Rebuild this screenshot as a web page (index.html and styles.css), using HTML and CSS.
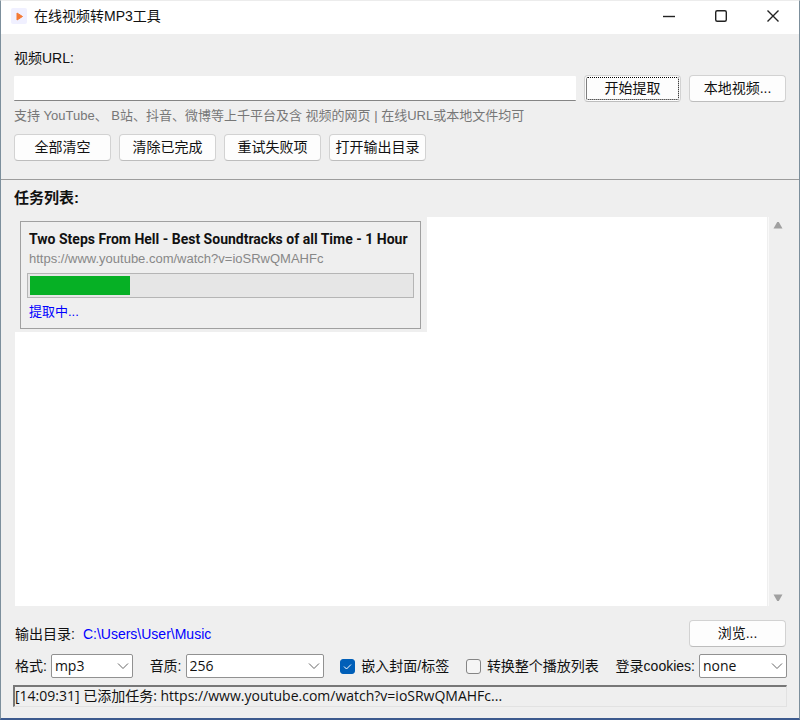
FILE: index.html
```html
<!DOCTYPE html>
<html lang="zh-CN">
<head>
<meta charset="utf-8">
<meta name="viewport" content="width=device-width, initial-scale=1">
<title>在线视频转MP3工具</title>
<link rel="stylesheet" href="styles.css">
</head>
<body>
<div class="window">
  <header class="titlebar">
    <svg class="app-icon" viewBox="0 0 16 16" aria-hidden="true"><rect width="16" height="16" rx="2" fill="#f0f0ff"/><path d="M6 5v7l5.5-3.5z" fill="#f47a35" stroke="#f47a35" stroke-linejoin="round"/></svg>
    <h1 class="title">在线视频转MP3工具</h1>
    <div class="controls">
      <button class="control" type="button" aria-label="最小化"><svg viewBox="0 0 14 14"><path d="M1 7.5h12"/></svg></button>
      <button class="control" type="button" aria-label="最大化"><svg viewBox="0 0 14 14"><rect x="1.7" y="1.7" width="10.6" height="10.6" rx="1.5"/></svg></button>
      <button class="control" type="button" aria-label="关闭"><svg viewBox="0 0 14 14"><path d="M1.5 1.5l11 11M12.5 1.5l-11 11"/></svg></button>
    </div>
  </header>

  <section class="source">
    <label class="url-label" for="url">视频URL:</label>
    <div class="url-row">
      <input class="url" id="url" type="text">
      <button class="btn btn-focused" type="button">开始提取</button>
      <button class="btn" type="button">本地视频...</button>
    </div>
    <p class="hint">支持 YouTube、 B站、抖音、微博等上千平台及含 视频的网页 | 在线URL或本地文件均可</p>
    <div class="actions">
      <button class="btn" type="button">全部清空</button>
      <button class="btn" type="button">清除已完成</button>
      <button class="btn" type="button">重试失败项</button>
      <button class="btn" type="button">打开输出目录</button>
    </div>
  </section>

  <main class="tasks">
    <h2 class="tasks-title">任务列表:</h2>
    <div class="task-area">
      <div class="task-list">
        <div class="task-cell">
          <article class="task">
            <h3 class="task-name">Two Steps From Hell - Best Soundtracks of all Time - 1 Hour</h3>
            <p class="task-url">https://www.youtube.com/watch?v=ioSRwQMAHFc</p>
            <div class="progress" role="progressbar" aria-valuenow="26" aria-valuemin="0" aria-valuemax="100"><div class="progress-fill" style="width:26.4%"></div></div>
            <p class="task-state">提取中...</p>
          </article>
        </div>
      </div>
      <div class="scrollbar" aria-hidden="true">
        <svg viewBox="0 0 10 8"><path d="M4.2 1h1.6L9.5 7.5h-9z"/></svg>
        <svg viewBox="0 0 10 8"><path d="M4.2 7h1.6L9.5.5h-9z"/></svg>
      </div>
    </div>
  </main>

  <footer class="footer">
    <div class="output">
      <span>输出目录:</span>
      <a class="path" href="#">C:\Users\User\Music</a>
      <button class="btn" type="button">浏览...</button>
    </div>
    <div class="options">
      <div class="field"><label for="format">格式:</label>
        <span class="select select-format"><select id="format"><option>mp3</option></select><svg viewBox="0 0 12 8"><path d="M1 1.5l5 5 5-5"/></svg></span></div>
      <div class="field"><label for="quality">音质:</label>
        <span class="select select-quality"><select id="quality"><option>256</option></select><svg viewBox="0 0 12 8"><path d="M1 1.5l5 5 5-5"/></svg></span></div>
      <label class="check"><input type="checkbox" checked><svg viewBox="0 0 15 15"><path d="M4 7.5l2.5 2.5L11 5.5"/></svg>嵌入封面/标签</label>
      <label class="check"><input type="checkbox">转换整个播放列表</label>
      <div class="field"><label for="cookies">登录cookies:</label>
        <span class="select select-cookies"><select id="cookies"><option>none</option></select><svg viewBox="0 0 12 8"><path d="M1 1.5l5 5 5-5"/></svg></span></div>
    </div>
    <p class="status">[14:09:31] 已添加任务: https://www.youtube.com/watch?v=ioSRwQMAHFc...</p>
  </footer>
</div>
</body>
</html>
```
FILE: styles.css
```css
:root {
  --face: #efefef;
  --ui: "Open Sans", "Noto Sans CJK SC", sans-serif;
  --classic: "Liberation Sans", "Noto Sans CJK SC", sans-serif;
}

* { box-sizing: border-box; }

body {
  margin: 0;
  background: #7c8f9c;
  color: #111;
  font: 14px/20px var(--classic);
}

h1, h2, h3, p { margin: 0; font-size: inherit; font-weight: normal; }

button, input, select { font: inherit; color: inherit; margin: 0; }

.window {
  display: flex;
  flex-direction: column;
  min-height: 100vh;
  background: var(--face);
  border: 1px solid #7c8f9c;
  border-top-color: #ececec;
  border-bottom: 2px solid #3c5a8e;
}

.titlebar {
  display: flex;
  align-items: center;
  height: 33px;
  padding: 0 0 3px 10px;
  background: #fff;
}

.app-icon { width: 16px; height: 16px; }

.title {
  flex: 1;
  margin-left: 7px;
  font: 14px/20px var(--classic);
}

.controls { display: flex; }

.control {
  display: grid;
  place-items: center;
  width: 52px;
  height: 30px;
  padding: 0;
  border: 0;
  background: none;
}

.control svg {
  width: 14px;
  height: 14px;
  fill: none;
  stroke: #222;
  stroke-width: 1.4;
}

.source {
  padding: 14px 13px 18px;
  border-bottom: 1px solid #9c9c9c;
}

.url-label { display: block; }

.url-row {
  display: flex;
  align-items: center;
  gap: 8px;
  margin-top: 7px;
}

.url {
  flex: 1;
  min-width: 0;
  height: 25px;
  padding: 0 6px;
  border: 0;
  border-bottom: 1px solid #858585;
  border-radius: 1px;
  background: #fff;
}

.btn {
  width: 97px;
  height: 27px;
  padding: 0 0 2px;
  border: 1px solid #d2d2d2;
  border-bottom-color: #bdbdbd;
  border-radius: 4px;
  background: #fdfdfd;
  line-height: 20px;
  white-space: nowrap;
}

.btn-focused {
  outline: 1px dotted #000;
  outline-offset: -3px;
}

.hint {
  margin: 4px 0 8px;
  color: #777;
  font-size: 13px;
}

.actions { display: flex; gap: 8px; }

.tasks {
  display: flex;
  flex: 1;
  flex-direction: column;
  padding: 8px 13px 0;
}

.tasks-title {
  font-size: 15px;
  font-weight: bold;
}

.task-area { display: flex; flex: 1; margin-top: 9px; }

.task-list {
  flex: 1;
  background: #fff;
  border-left: 1px solid var(--face);
}

.task-cell {
  width: fit-content;
  padding: 4px 6px 3px 5px;
  background: var(--face);
}

.task {
  padding: 7px 6px 6px;
  border: 1px solid #a0a0a0;
}

.task-name {
  padding: 0 6px 0 2px;
  font-family: Roboto, var(--classic);
  font-weight: bold;
  white-space: nowrap;
}

.task-url {
  padding: 0 2px;
  color: #888;
  font-size: 13px;
}

.progress {
  height: 25px;
  margin: 4px 0;
  padding: 2px;
  border: 1px solid #b5b5b5;
  background: #e6e6e6;
}

.progress-fill { height: 100%; background: #06b025; }

.task-state {
  padding: 0 2px;
  color: #00f;
  font-size: 13px;
}

.scrollbar {
  display: flex;
  flex-direction: column;
  justify-content: space-between;
  align-items: center;
  width: 18px;
  margin-left: 1px;
  padding: 4px 3px 4px 4px;
  border-left: 1px solid #f9f9f9;
}

.scrollbar svg { width: 10px; height: 8px; fill: #a0a0a0; }

.footer { padding: 14px 12px 11px; }

.output {
  display: flex;
  align-items: center;
  gap: 8px;
  padding: 0 1px 0 2px;
}

.path { flex: 1; color: #00f; text-decoration: none; }

.options {
  display: flex;
  align-items: center;
  justify-content: space-between;
  margin-top: 7px;
  padding-left: 2px;
  white-space: nowrap;
}

.field { display: flex; align-items: center; gap: 4px; }

.select { position: relative; display: block; height: 24px; }

.select-format { width: 82px; }
.select-quality { width: 138px; }
.select-cookies { width: 88px; }

.select select {
  appearance: none;
  width: 100%;
  height: 24px;
  padding: 0 20px 0 3px;
  border: 1px solid #919191;
  border-radius: 2px;
  background: #fff;
  font-family: var(--ui);
}

.select svg {
  position: absolute;
  top: 8px;
  right: 4px;
  width: 12px;
  height: 8px;
  fill: none;
  stroke: #666;
  pointer-events: none;
}

.check { position: relative; display: flex; align-items: center; gap: 6px; }

.check input {
  appearance: none;
  width: 15px;
  height: 15px;
  border: 1px solid #858585;
  border-radius: 3px;
  background: #f5f5f5;
}

.check input:checked { border-color: #005fb8; background: #005fb8; }

.check svg {
  position: absolute;
  left: 0;
  width: 15px;
  height: 15px;
  fill: none;
  stroke: #fff;
  pointer-events: none;
}

.status {
  height: 22px;
  margin-top: 7px;
  border: 1px solid #e2e2e2;
  border-top: 2px solid #777;
  border-left: 2px solid #777;
  font: 14px/18px var(--ui);
  white-space: nowrap;
  overflow: hidden;
}
```
